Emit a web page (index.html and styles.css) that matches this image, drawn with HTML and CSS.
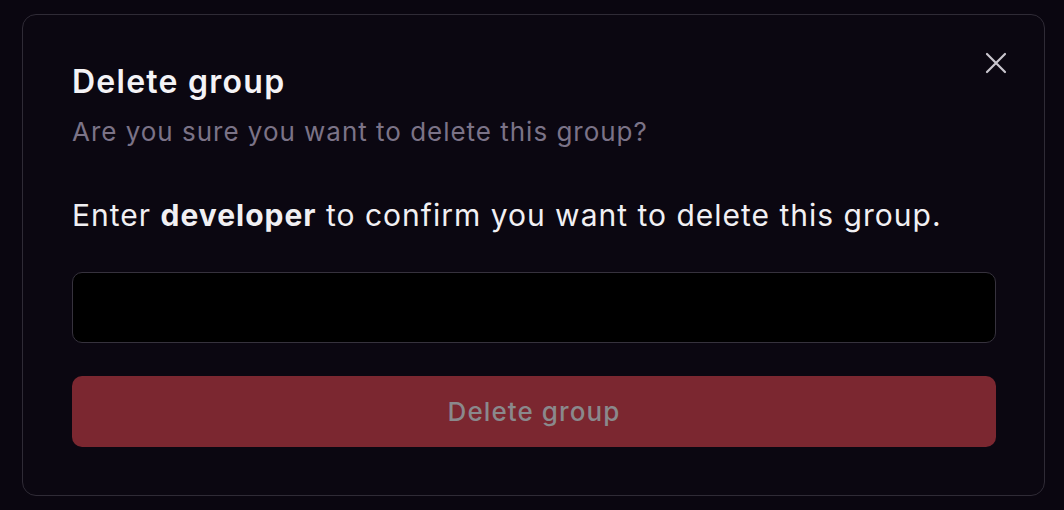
FILE: index.html
```html
<!DOCTYPE html>
<html>
<head>
<meta charset="utf-8">
<link rel="stylesheet" href="styles.css">
</head>
<body>
<div class="dialog">
  <button class="close" aria-label="Close">
    <svg width="24" height="24" viewBox="0 0 24 24"><path d="M3 3 L21 21 M21 3 L3 21" stroke="#c9c6ce" stroke-width="2.2" stroke-linecap="round"/></svg>
  </button>
  <h2 class="title">Delete group</h2>
  <p class="subtitle">Are you sure you want to delete this group?</p>
  <p class="prompt">Enter <strong>developer</strong> to confirm you want to delete this group.</p>
  <input class="field" type="text">
  <button class="danger">Delete group</button>
</div>
</body>
</html>
```
FILE: styles.css
```css
html, body {
  margin: 0;
  background: #0a0610;
  font-family: Inter, "Noto Sans", sans-serif;
}
body {
  padding: 13.5px 19px 14px 22px;
}
.dialog {
  position: relative;
  box-sizing: border-box;
  width: 1023px;
  height: 482px;
  border: 1.5px solid #2f2b36;
  border-radius: 14px;
  background: #0b0711;
  padding: 47px 48px 0 49px;
  display: flex;
  flex-direction: column;
}
.close {
  position: absolute;
  top: 36px;
  right: 36px;
  background: none;
  border: 0;
  padding: 0;
  width: 24px;
  height: 24px;
  cursor: pointer;
}
.close svg { display: block; }
.title {
  margin: 0;
  color: #f4f3f6;
  font-size: 32px;
  font-weight: 600;
  line-height: 40px;
  letter-spacing: 1.25px;
}
.subtitle {
  margin: 12px 0 0;
  color: #7b7387;
  font-size: 26px;
  line-height: 36px;
  letter-spacing: 0.98px;
}
.prompt {
  margin: 45px 0 0;
  color: #f1f0f3;
  font-size: 30px;
  line-height: 40px;
  letter-spacing: 1px;
}
.prompt strong { font-weight: 700; }
.field {
  margin: 37px 0 0;
  box-sizing: border-box;
  width: 924px;
  height: 71px;
  background: #000;
  border: 1.5px solid #36323d;
  border-radius: 10px;
  color: #fff;
  outline: none;
}
.danger {
  margin-top: 33px;
  width: 924px;
  height: 71px;
  border: 0;
  border-radius: 10px;
  background: #7b2730;
  color: #8a898c;
  font-family: Inter, "Noto Sans", sans-serif;
  font-size: 26px;
  font-weight: 500;
  letter-spacing: 1.1px;
}
```
